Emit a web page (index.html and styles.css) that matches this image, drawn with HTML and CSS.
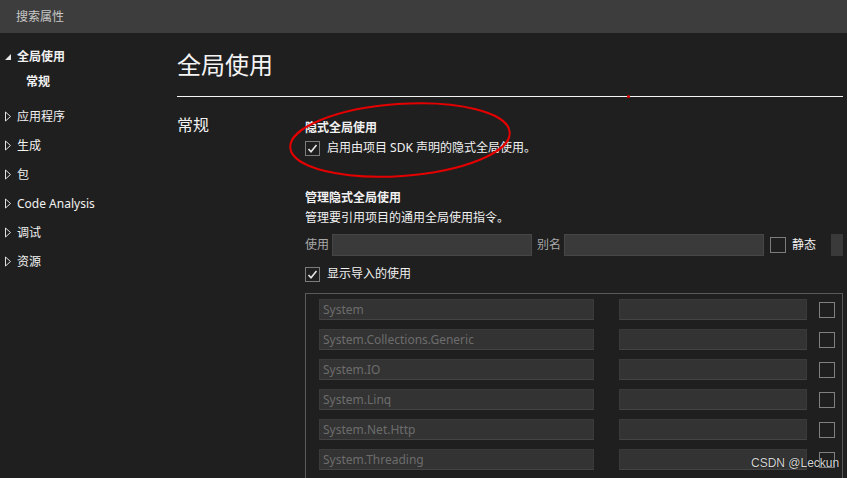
FILE: index.html
```html
<!DOCTYPE html>
<html lang="zh">
<head>
<meta charset="utf-8">
<link rel="stylesheet" href="styles.css">
</head>
<body>
<div class="topbar">搜索属性</div>
<div class="layout">
  <nav class="sidebar">
    <div class="nav-item expanded bold">
      <svg class="tri" width="8" height="8" viewBox="0 0 8 8"><polygon points="7,1 7,7 1,7" fill="#e8e8e8"/></svg>
      <span>全局使用</span>
    </div>
    <div class="nav-sub bold">常规</div>
    <div class="nav-item first-collapsed">
      <svg class="tri" width="8" height="11" viewBox="0 0 8 11"><polygon points="1.5,1 6.5,5.5 1.5,10" fill="none" stroke="#e0e0e0" stroke-width="1"/></svg>
      <span>应用程序</span>
    </div>
    <div class="nav-item">
      <svg class="tri" width="8" height="11" viewBox="0 0 8 11"><polygon points="1.5,1 6.5,5.5 1.5,10" fill="none" stroke="#e0e0e0" stroke-width="1"/></svg>
      <span>生成</span>
    </div>
    <div class="nav-item">
      <svg class="tri" width="8" height="11" viewBox="0 0 8 11"><polygon points="1.5,1 6.5,5.5 1.5,10" fill="none" stroke="#e0e0e0" stroke-width="1"/></svg>
      <span>包</span>
    </div>
    <div class="nav-item">
      <svg class="tri" width="8" height="11" viewBox="0 0 8 11"><polygon points="1.5,1 6.5,5.5 1.5,10" fill="none" stroke="#e0e0e0" stroke-width="1"/></svg>
      <span>Code Analysis</span>
    </div>
    <div class="nav-item">
      <svg class="tri" width="8" height="11" viewBox="0 0 8 11"><polygon points="1.5,1 6.5,5.5 1.5,10" fill="none" stroke="#e0e0e0" stroke-width="1"/></svg>
      <span>调试</span>
    </div>
    <div class="nav-item">
      <svg class="tri" width="8" height="11" viewBox="0 0 8 11"><polygon points="1.5,1 6.5,5.5 1.5,10" fill="none" stroke="#e0e0e0" stroke-width="1"/></svg>
      <span>资源</span>
    </div>
  </nav>
  <main class="main">
    <header class="page-head">
      <h1 class="page-title">全局使用</h1>
      <span class="red-dot"></span>
    </header>
    <section class="section">
      <h2 class="section-title">常规</h2>
      <div class="section-body">
        <h3 class="group-title">隐式全局使用</h3>
        <label class="check-row">
          <span class="checkbox checked">
            <svg width="13" height="13" viewBox="0 0 13 13"><polyline points="2.5,7 5,9.8 10.5,3" fill="none" stroke="#e6e6e6" stroke-width="1.6"/></svg>
          </span>
          <span>启用由项目 SDK 声明的隐式全局使用。</span>
        </label>

        <h3 class="group-title second">管理隐式全局使用</h3>
        <p class="desc">管理要引用项目的通用全局使用指令。</p>
        <div class="add-row">
          <span class="field-label">使用</span>
          <span class="input wide"></span>
          <span class="field-label alias">别名</span>
          <span class="input wide"></span>
          <span class="checkbox small-gap"></span>
          <span class="static-label">静态</span>
          <span class="add-btn"></span>
        </div>
        <label class="check-row show-imports">
          <span class="checkbox checked">
            <svg width="13" height="13" viewBox="0 0 13 13"><polyline points="2.5,7 5,9.8 10.5,3" fill="none" stroke="#e6e6e6" stroke-width="1.6"/></svg>
          </span>
          <span>显示导入的使用</span>
        </label>

        <div class="using-list">
          <div class="using-row"><span class="cell name">System</span><span class="cell alias-cell"></span><span class="checkbox box16"></span></div>
          <div class="using-row"><span class="cell name">System.Collections.Generic</span><span class="cell alias-cell"></span><span class="checkbox box16"></span></div>
          <div class="using-row"><span class="cell name">System.IO</span><span class="cell alias-cell"></span><span class="checkbox box16"></span></div>
          <div class="using-row"><span class="cell name">System.Linq</span><span class="cell alias-cell"></span><span class="checkbox box16"></span></div>
          <div class="using-row"><span class="cell name">System.Net.Http</span><span class="cell alias-cell"></span><span class="checkbox box16"></span></div>
          <div class="using-row"><span class="cell name">System.Threading</span><span class="cell alias-cell"></span><span class="checkbox box16"></span></div>
        </div>
      </div>
    </section>
  </main>
</div>
<svg class="annotation" width="847" height="478" viewBox="0 0 847 478">
  <ellipse cx="400" cy="140" rx="110" ry="36" transform="rotate(-4 400 140)" fill="none" stroke="#e40000" stroke-width="2"/>
</svg>
<div class="watermark">CSDN @Leckun</div>
</body>
</html>
```

FILE: styles.css
```css
html, body {
  margin: 0;
  padding: 0;
  width: 847px;
  height: 478px;
  overflow: hidden;
}
body {
  background: #1f1f1f;
  color: #f1f1f1;
  font-family: "Noto Sans", "Noto Sans CJK SC", sans-serif;
  font-size: 12px;
  line-height: 18px;
  position: relative;
}
.topbar {
  height: 33px;
  background: #3d3d3d;
  color: #c8c8c8;
  display: flex;
  align-items: center;
  padding-left: 16px;
  font-size: 12px;
}
.layout {
  display: flex;
}
.sidebar {
  width: 177px;
  flex: none;
  padding-top: 10px;
}
.nav-item {
  height: 29px;
  display: flex;
  align-items: center;
  padding-left: 4px;
  color: #f1f1f1;
}
.nav-item.expanded {
  height: 28px;
}
.nav-item .tri {
  width: 8px;
  margin-right: 5px;
  flex: none;
}
.nav-item.first-collapsed {
  margin-top: 9px;
}
.bold {
  font-weight: bold;
}
.nav-sub {
  height: 22px;
  display: flex;
  align-items: center;
  padding-left: 26px;
}
.main {
  flex: 1;
  padding-right: 4px;
}
.page-head {
  height: 63px;
  border-bottom: 1px solid #f4f4f4;
  display: flex;
  align-items: flex-start;
  position: relative;
}
.page-title {
  margin: 16px 0 0 0;
  font-size: 24px;
  line-height: 32px;
  font-weight: normal;
  color: #f4f4f4;
}
.red-dot {
  position: absolute;
  left: 450px;
  bottom: -2px;
  width: 3px;
  height: 3px;
  border-radius: 50%;
  background: #e40000;
}
.section {
  display: flex;
}
.section-title {
  width: 128px;
  flex: none;
  margin: 17px 0 0 0;
  font-size: 16px;
  line-height: 22px;
  font-weight: normal;
  color: #f1f1f1;
}
.section-body {
  flex: 1;
  padding-top: 22px;
}
.group-title {
  margin: 0;
  font-size: 12px;
  line-height: 18px;
  font-weight: bold;
}
.group-title.second {
  margin-top: 31px;
}
.check-row {
  display: flex;
  align-items: center;
  height: 20px;
  margin-top: 1px;
}
.check-row .checkbox {
  margin-right: 7px;
}
.checkbox {
  width: 15px;
  height: 15px;
  box-sizing: border-box;
  border: 1px solid #7c7c7c;
  display: flex;
  align-items: center;
  justify-content: center;
  flex: none;
}
.desc {
  margin: 2px 0 0 0;
  line-height: 18px;
}
.add-row {
  margin-top: 7px;
  height: 22px;
  display: flex;
  align-items: center;
}
.field-label {
  color: #a8a8a8;
  width: 27px;
  flex: none;
}
.field-label.alias {
  margin-left: 5px;
}
.input {
  height: 22px;
  box-sizing: border-box;
  background: #3a3a3a;
  border: 1px solid #464646;
  flex: none;
}
.input.wide {
  width: 200px;
}
.checkbox.small-gap {
  margin-left: 6px;
  width: 16px;
  height: 16px;
}
.static-label {
  margin-left: 6px;
  color: #f1f1f1;
}
.add-btn {
  margin-left: 15px;
  width: 12px;
  height: 22px;
  background: #3a3a3a;
}
.check-row.show-imports {
  margin-top: 8px;
}
.using-list {
  margin-top: 9px;
  border: 1px solid #5a5a5a;
  padding: 5px 0 20px 13px;
  display: flex;
  flex-direction: column;
  gap: 9px;
}
.using-row {
  display: flex;
  align-items: center;
  height: 21px;
}
.cell {
  height: 21px;
  box-sizing: border-box;
  background: #333333;
  border: 1px solid #3a3a3a;
  border-bottom-color: #444444;
  flex: none;
  color: #6c6c6c;
  padding-left: 3px;
  line-height: 19px;
  font-size: 12px;
}
.cell.name {
  width: 275px;
}
.cell.alias-cell {
  width: 188px;
  margin-left: 25px;
}
.checkbox.box16 {
  width: 16px;
  height: 16px;
  margin-left: 12px;
  border-color: #808080;
}
.annotation {
  position: absolute;
  left: 0;
  top: 0;
  pointer-events: none;
}
.watermark {
  position: absolute;
  left: 751px;
  top: 454px;
  font-family: "Liberation Sans", sans-serif;
  font-size: 12px;
  line-height: 18px;
  color: #d4d4d4;
  text-shadow: 0 0 1px #000;
}
```
